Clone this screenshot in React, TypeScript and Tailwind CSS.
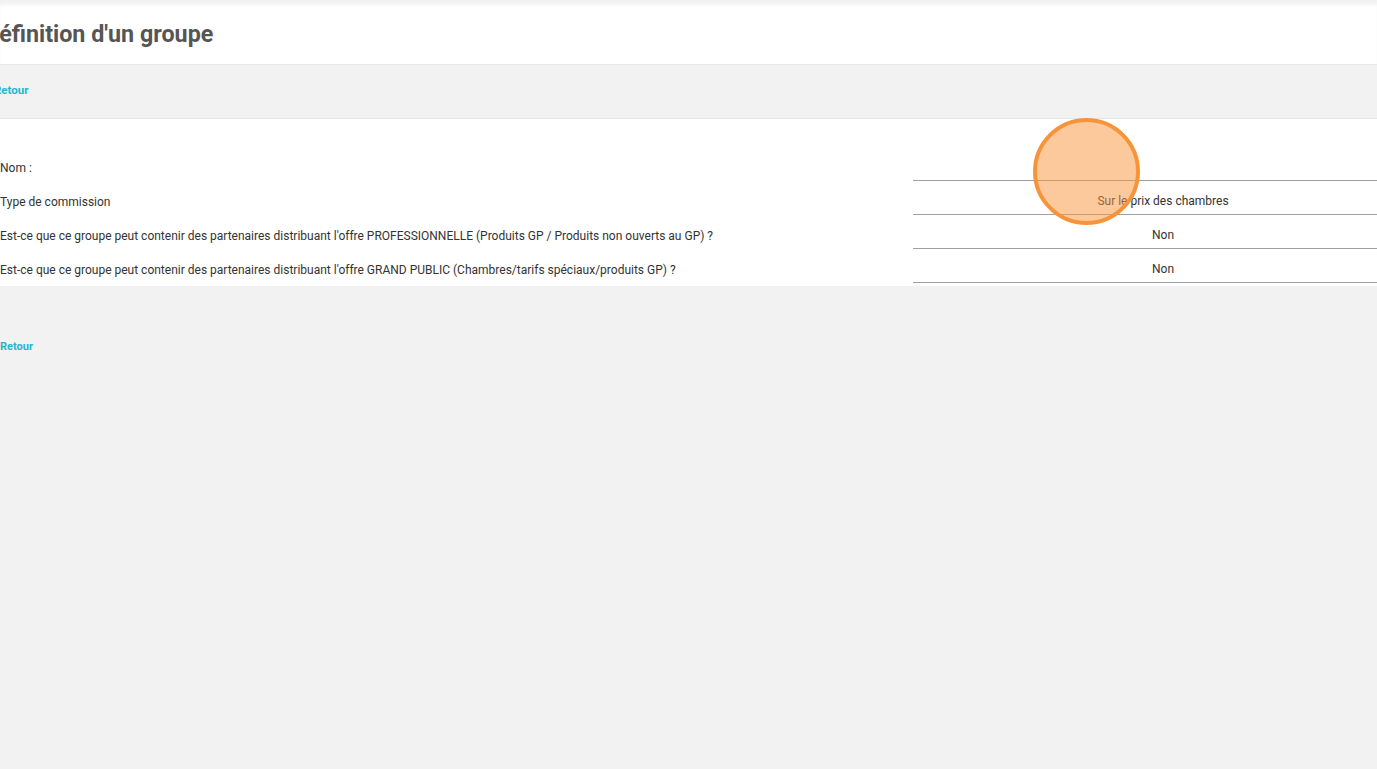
export default function App() {
  const rows = [
    { label: "Nom :", value: "" },
    { label: "Type de commission", value: "Sur le prix des chambres" },
    {
      label:
        "Est-ce que ce groupe peut contenir des partenaires distribuant l'offre PROFESSIONNELLE (Produits GP / Produits non ouverts au GP) ?",
      value: "Non",
    },
    {
      label:
        "Est-ce que ce groupe peut contenir des partenaires distribuant l'offre GRAND PUBLIC (Chambres/tarifs spéciaux/produits GP) ?",
      value: "Non",
    },
  ];

  return (
    <div className="relative min-h-screen w-full overflow-hidden bg-[#f2f2f2] pt-[3px] font-['Roboto',sans-serif]">
      {/* header */}
      <div className="h-[62px] bg-white shadow-[inset_0_3px_4px_-2px_rgba(0,0,0,0.07)] border-b border-[#e9e9e9]">
        <h1 className="-ml-[16px] text-[23.3px] font-bold leading-[62px] text-[#555555]">
          Définition d'un groupe
        </h1>
      </div>

      {/* toolbar */}
      <div className="flex h-[54px] items-center border-b border-[#e6e6e6] bg-[#f2f2f2] pb-[2px]">
        <a className="-ml-[6px] text-[11.5px] font-bold text-[#22b8c8]">Retour</a>
      </div>

      {/* form */}
      <div className="bg-white pt-[28px] pb-[3px]">
        {rows.map((row) => (
          <div key={row.label} className="grid h-[34px] grid-cols-[913px_500px]">
            <div className="flex items-center pt-[7px] text-[12px] text-[#333333]">
              {row.label}
            </div>
            <div className="flex items-center justify-center border-b border-[#a0a0a0] pt-[7px] text-[12px] text-[#333333]">
              {row.value}
            </div>
          </div>
        ))}
      </div>

      {/* footer */}
      <div className="pt-[47px]">
        <a className="text-[11px] font-bold text-[#22b8c8]">Retour</a>
      </div>

      {/* click marker */}
      <div className="absolute left-[1033px] top-[118px] h-[107px] w-[107px] rounded-full border-4 border-[#f7943a] bg-[#f7943a]/50" />
    </div>
  );
}
